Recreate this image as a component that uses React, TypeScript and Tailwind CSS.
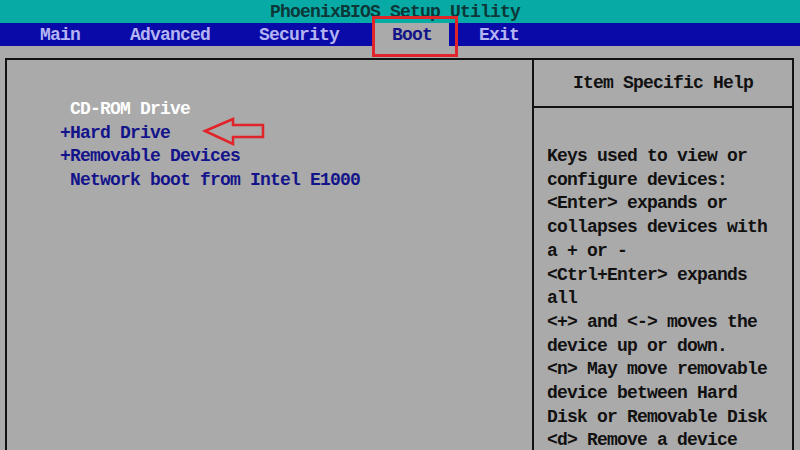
const MENU = [
  { label: 'Main', active: false, gap: 'ml-[40px]' },
  { label: 'Advanced', active: false, gap: 'ml-[50px]' },
  { label: 'Security', active: false, gap: 'ml-[49px]' },
  { label: 'Boot', active: true, gap: 'ml-[36px]' },
  { label: 'Exit', active: false, gap: 'ml-[30px]' },
]

const BOOT_ITEMS = [
  { prefix: ' ', label: 'CD-ROM Drive', selected: true },
  { prefix: '+', label: 'Hard Drive', selected: false },
  { prefix: '+', label: 'Removable Devices', selected: false },
  { prefix: ' ', label: 'Network boot from Intel E1000', selected: false },
]

const HELP = [
  'Keys used to view or',
  'configure devices:',
  '<Enter> expands or',
  'collapses devices with',
  'a + or -',
  '<Ctrl+Enter> expands',
  'all',
  '<+> and <-> moves the',
  'device up or down.',
  '<n> May move removable',
  'device between Hard',
  'Disk or Removable Disk',
  '<d> Remove a device',
]

export default function App() {
  return (
    <div className="relative w-[800px] h-[450px] overflow-hidden bg-[#aaaaaa] font-['Liberation_Mono',monospace] font-bold text-[18px] tracking-[-0.8px] leading-[23.7px]">
      <div className="h-[23px] bg-[#08aaa6] flex items-center justify-center pr-[10px] pt-[2px] text-[#0c3838]">
        PhoenixBIOS Setup Utility
      </div>

      <div className="h-[23px] bg-[#0a0aa8] flex items-stretch text-[#b4b4f2]">
        {MENU.map((m) => (
          <div
            key={m.label}
            className={
              m.active
                ? `${m.gap} w-[74px] pt-[3px] bg-[#aaaaaa] text-[#14148a] flex items-center justify-center`
                : `${m.gap} pt-[3px] flex items-center`
            }
          >
            {m.label}
          </div>
        ))}
      </div>

      <div className="pt-[12px] pl-[5px] pr-[6px]">
        <div className="flex h-[420px] border-2 border-[#111] border-b-0">
          <div className="w-[527px] border-r-2 border-[#111] pt-[38px] pl-[53px]">
            {BOOT_ITEMS.map((item) => (
              <div key={item.label} className="flex whitespace-pre">
                <span className="w-[10px] text-[#14148a]">{item.prefix}</span>
                <span className={item.selected ? 'text-white' : 'text-[#14148a]'}>
                  {item.label}
                </span>
              </div>
            ))}
          </div>

          <div className="flex-1 flex flex-col">
            <div className="h-[48px] pt-[2px] border-b-2 border-[#111] flex items-center justify-center text-[#111]">
              Item Specific Help
            </div>
            <div className="pt-[37px] pl-[13px] text-[#111] whitespace-pre">
              {HELP.map((line) => (
                <div key={line}>{line}</div>
              ))}
            </div>
          </div>
        </div>
      </div>

      {/* red annotation box around Boot */}
      <div className="absolute left-[372px] top-[16px] w-[86px] h-[41px] border-[3px] border-[#e0242a]" />

      {/* red arrow pointing at Hard Drive */}
      <svg className="absolute left-[200px] top-[115px]" width="68" height="34" viewBox="0 0 68 34">
        <path
          d="M5 16 L33 4 L33 10 L63 10 L63 22 L33 22 L33 29 Z"
          fill="none"
          stroke="#e0242a"
          strokeWidth="2.5"
          strokeLinejoin="miter"
        />
      </svg>
    </div>
  )
}
